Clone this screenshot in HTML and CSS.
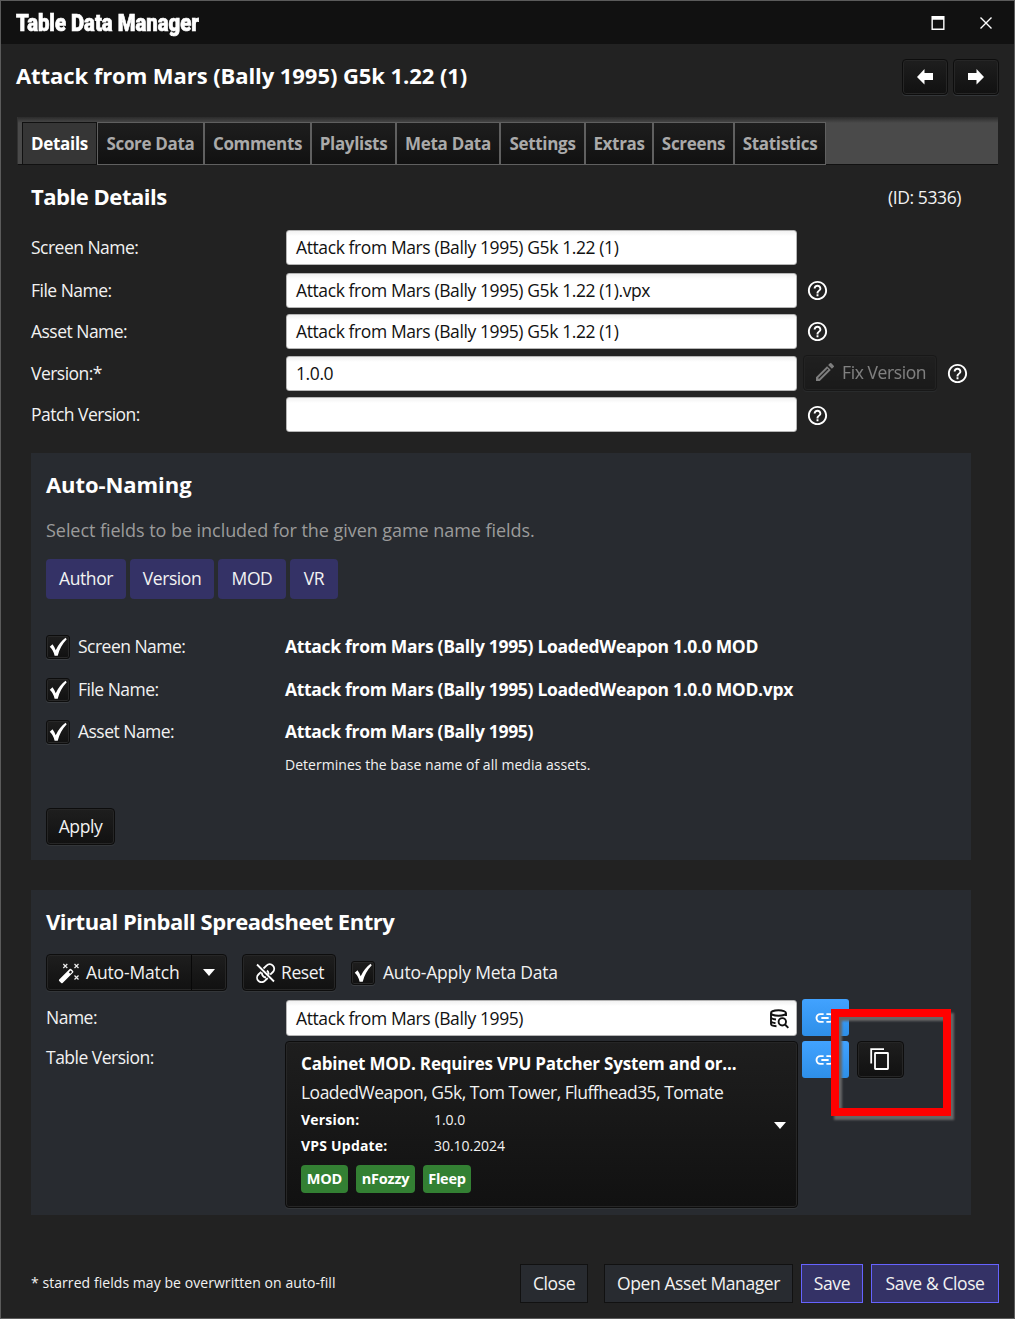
FILE: index.html
```html
<!DOCTYPE html>
<html lang="en">
<head>
<meta charset="utf-8">
<title>Table Data Manager</title>
<link rel="stylesheet" href="styles.css">
</head>
<body>
<svg class="defs" aria-hidden="true">
  <symbol id="help" viewBox="0 0 24 24"><path d="M11 18h2v-2h-2v2zm1-16C6.480 2 2 6.480 2 12s4.480 10 10 10 10-4.480 10-10S17.520 2 12 2zm0 18c-4.410 0-8-3.590-8-8s3.590-8 8-8 8 3.590 8 8-3.590 8-8 8zm0-14c-2.210 0-4 1.790-4 4h2c0-1.100.9-2 2-2s2 .9 2 2c0 2-3 1.750-3 5h2c0-2.250 3-2.500 3-5 0-2.210-1.790-4-4-4z"/></symbol>
  <symbol id="check" viewBox="0 0 24 24"><path d="M3 11.800 6 9Q8.200 11.800 9.500 15.500 13.500 7 20.200 2L21.500 3.500Q14 11.500 11.700 21.500H8.300Q6.800 15 3 11.800Z"/></symbol>
  <symbol id="link" viewBox="0 0 24 24"><path d="M10.500 6.700H7a5.300 5.300 0 0 0 0 10.600h3.500v-2.100H7a3.200 3.200 0 0 1 0-6.400h3.500zM8 11h8v2H8zM13.500 6.700H17a5.300 5.300 0 0 1 0 10.600h-3.500v-2.100H17a3.200 3.200 0 0 0 0-6.400h-3.500z"/></symbol>
</svg>
<div class="window">
  <header class="titlebar">
    <span class="app-name">Table Data Manager</span>
    <svg class="win-max" viewBox="0 0 14 15"><path d="M0 0h14v15H0zM1.500 4v9.500h11V4z" fill-rule="evenodd"/></svg>
    <svg class="win-close" viewBox="0 0 12 12"><path d="M.5.5l11 11M11.500.5l-11 11"/></svg>
  </header>
  <div class="heading">
    <h1>Attack from Mars (Bally 1995) G5k 1.22 (1)</h1>
    <button class="btn nav"><svg width="16" height="16" viewBox="0 0 16 16"><path d="M0 8 7.500 0v4H16v7H7.500v4.500z"/></svg></button>
    <button class="btn nav"><svg width="16" height="16" viewBox="0 0 16 16"><path d="M16 8 8.500 0v4H0v7h8.500v4.500z"/></svg></button>
  </div>
  <nav class="tabs">
    <span class="tab active t1">Details</span><span class="tab t2">Score Data</span><span class="tab t3">Comments</span><span class="tab t4">Playlists</span><span class="tab t5">Meta Data</span><span class="tab t6">Settings</span><span class="tab t7">Extras</span><span class="tab t8">Screens</span><span class="tab t9">Statistics</span>
  </nav>
  <main>
    <div class="section-head"><h2 class="tight">Table Details</h2><span class="record-id">(ID: 5336)</span></div>
    <div class="form">
      <div class="row"><label>Screen Name:</label><div class="field">Attack from Mars (Bally 1995) G5k 1.22 (1)</div></div>
      <div class="row"><label>File Name:</label><div class="field">Attack from Mars (Bally 1995) G5k 1.22 (1).vpx</div><svg class="help"><use href="#help"/></svg></div>
      <div class="row"><label>Asset Name:</label><div class="field">Attack from Mars (Bally 1995) G5k 1.22 (1)</div><svg class="help"><use href="#help"/></svg></div>
      <div class="row"><label>Version:*</label><div class="field">1.0.0</div><button class="btn fix" disabled><svg width="24" height="24" viewBox="0 0 24 24"><path d="M3 17.250V21h3.750L17.810 9.940l-3.750-3.750L3 17.250zM20.710 7.040a1 1 0 0 0 0-1.410l-2.340-2.340a1 1 0 0 0-1.410 0l-1.830 1.830 3.750 3.750 1.830-1.830z"/><path class="groove" d="M5.500 18.500 15 9"/></svg><span>Fix Version</span></button><svg class="help"><use href="#help"/></svg></div>
      <div class="row"><label>Patch Version:</label><div class="field"></div><svg class="help low"><use href="#help"/></svg></div>
    </div>
    <section class="panel naming">
      <h2>Auto-Naming</h2>
      <p class="hint">Select fields to be included for the given game name fields.</p>
      <div class="tokens"><button class="k1">Author</button><button class="k2">Version</button><button class="k3">MOD</button><button class="k4">VR</button></div>
      <div class="previews">
        <div class="preview"><span class="check"><svg><use href="#check"/></svg></span><label>Screen Name:</label><b>Attack from Mars (Bally 1995) LoadedWeapon 1.0.0 MOD</b></div>
        <div class="preview"><span class="check"><svg><use href="#check"/></svg></span><label>File Name:</label><b>Attack from Mars (Bally 1995) LoadedWeapon 1.0.0 MOD.vpx</b></div>
        <div class="preview"><span class="check"><svg><use href="#check"/></svg></span><label>Asset Name:</label><b>Attack from Mars (Bally 1995)</b></div>
      </div>
      <p class="note">Determines the base name of all media assets.</p>
      <button class="btn apply">Apply</button>
    </section>
    <section class="panel vps">
      <h2 class="tight">Virtual Pinball Spreadsheet Entry</h2>
      <div class="tools">
        <div class="btn split"><svg width="24" height="24" viewBox="0 0 24 24"><path d="M2.200 18.600 12.700 8.100a1 1 0 0 1 1.400 0l2 2a1 1 0 0 1 0 1.400L5.600 22a1 1 0 0 1-1.400 0l-2-2a1 1 0 0 1 0-1.400z"/><path class="tip" d="M11.800 11.200l1.800-1.800 1.500 1.500-1.800 1.800z"/><path class="spark" d="M6.300 3l4 4M10.300 3l-4 4M17.500 3l4 4M21.500 3l-4 4M17.500 14.500l4 4M21.500 14.500l-4 4"/></svg><span class="split-text">Auto-Match</span><span class="split-arrow"><i class="caret"></i></span></div>
        <button class="btn reset"><svg width="20" height="20" viewBox="0 0 20 20"><path d="M1 1.500 18 18.500M7.500 5.500 10.500 2.600a4.500 4.500 0 0 1 6.400 6.400l-2.700 2.700M11 7.500a4.300 4.300 0 0 1 1.500 4M5.200 8.800l-2.800 2.700a4.500 4.500 0 0 0 6.400 6.400l2.900-2.900M6 9.500a4.300 4.300 0 0 0 4 5"/></svg><span>Reset</span></button>
        <span class="check"><svg><use href="#check"/></svg></span><label>Auto-Apply Meta Data</label>
      </div>
      <div class="entry name-entry"><label>Name:</label><div class="field">Attack from Mars (Bally 1995)<svg class="db" viewBox="0 0 20 20"><path d="M17 7V4c0-1.500-3.200-2.700-7.500-2.700S2 2.500 2 4v11c0 1.200 2.500 2 5.500 2.200M2 4c0 1.500 3.200 2.800 7.500 2.800S17 5.500 17 4M2 8c0 1.200 2 2.100 5 2.500M2 12c0 1 2 1.800 4.500 2.200"/><circle cx="13.300" cy="12.800" r="3.700"/><path d="M16 15.500l3.300 3.300"/></svg></div><button class="link"><svg width="24" height="24"><use href="#link"/></svg></button></div>
      <div class="entry"><label>Table Version:</label>
        <div class="btn version">
          <strong>Cabinet MOD. Requires VPU Patcher System and or...</strong>
          <span class="authors">LoadedWeapon, G5k, Tom Tower, Fluffhead35, Tomate</span>
          <div class="meta"><b>Version:</b><span>1.0.0</span></div>
          <div class="meta"><b>VPS Update:</b><span>30.10.2024</span></div>
          <div class="tags"><span class="g1">MOD</span><span class="g2">nFozzy</span><span class="g3">Fleep</span></div>
          <i class="caret"></i>
        </div>
        <button class="link"><svg width="24" height="24"><use href="#link"/></svg></button>
        <button class="btn copy"><svg width="20" height="22" viewBox="0 0 20 22"><path d="M1.200 15.500V1.200H14"/><rect x="5" y="5" width="13" height="16" rx=".5"/></svg><span class="marker"></span></button>
      </div>
    </section>
  </main>
  <footer>
    <span class="footnote">* starred fields may be overwritten on auto-fill</span>
    <button class="close">Close</button><button class="assets">Open Asset Manager</button><button class="primary save">Save</button><button class="primary save-close">Save &amp; Close</button>
  </footer>
</div>
</body>
</html>
```
FILE: styles.css
```css
* { box-sizing: border-box; }
body { margin: 0; background: #222; color: #f2f2f2; font: 17.5px/24px "Open Sans", "Noto Sans", sans-serif; letter-spacing: -.4px; white-space: nowrap; }
h1, h2, p { margin: 0; }
h1, h2 { font-size: 22px; line-height: 28px; padding-bottom: 2px; font-weight: 700; color: #fff; letter-spacing: -.07px; }
h2.tight { letter-spacing: -.47px; }
button { font: inherit; color: inherit; letter-spacing: inherit; padding: 0 0 2px; border: 0; }
svg { display: block; flex: none; }
.defs { position: absolute; width: 0; height: 0; }
.window { width: 1015px; height: 1319px; border: 1px solid #5b5b5b; display: flex; flex-direction: column; overflow: hidden; }

.titlebar { height: 43px; background: #111; display: flex; align-items: center; padding: 0 22px 0 15px; flex: none; }
.app-name { font: 900 24px/30px Roboto, sans-serif; letter-spacing: 0; color: #fff; -webkit-text-stroke: .7px #fff; transform: scaleX(.845); transform-origin: left; margin-right: auto; }
.win-max { width: 14px; height: 14px; fill: #fff; margin-right: 35px; }
.win-close { width: 12px; height: 12px; stroke: #fff; stroke-width: 1.4; }

.heading { height: 73px; display: flex; align-items: center; gap: 5px; padding: 0 15px 8px 15px; flex: none; }
.heading h1 { margin: -2px auto 0 0; }
.btn { background: linear-gradient(#1e1e1e, #111); border: 1px solid #0d0d0d; border-radius: 4px; box-shadow: inset 0 0 0 1px #262626, 0 1px 0 #333639; display: flex; align-items: center; color: #f2f2f2; }
.nav { width: 46px; height: 36px; justify-content: center; padding: 0; }
.nav svg { fill: #fff; }

.tabs { height: 48px; margin: 0 16px; padding: 5px 0 0 4px; display: flex; flex: none; background: linear-gradient(#2b2b2b, #4a4a4a 6px); border-bottom: 1px solid #111; border-left: 1px solid #333; }
.tab { height: 43px; border: 1px solid #606060; background: linear-gradient(#1e1e1e, #111); font-size: 17px; font-weight: 700; letter-spacing: -.32px; color: #aaa; text-align: center; line-height: 41px; }
.tab.active { background: #363636; color: #fff; border-color: #111; }
.t1 { width: 75px; } .t2 { width: 107px; } .t3 { width: 107px; } .t4 { width: 85px; } .t5 { width: 104px; } .t6 { width: 85px; } .t7 { width: 68px; } .t8 { width: 81px; } .t9 { width: 92px; }

main { padding: 0 43px 0 30px; }
.section-head { display: flex; justify-content: space-between; align-items: center; height: 65px; padding-right: 10px; }
.section-head h2 { margin-top: -2px; }
.record-id { padding-bottom: 2px; }
.form { display: grid; grid-template-rows: 43px 41px 42px 41px 35px; }
.row { display: flex; height: 35px; align-items: center; }
.row label { width: 255px; letter-spacing: -.52px; padding-bottom: 2px; }
.field { width: 511px; height: 35px; border: 1px solid #b5b5b5; border-radius: 3px; background: linear-gradient(#f1f1f1, #fff 5px); color: #111; padding-left: 9px; display: flex; align-items: center; line-height: 33px; }
.help { width: 23px; height: 23px; fill: #fff; margin-left: 9px; }
.help.low { margin-top: 2px; }
.fix { width: 134px; height: 36px; margin: -2px 0 0 6px; padding: 0 0 1px 9px; gap: 5px; opacity: .45; }
.fix svg { fill: #eee; }
.groove { stroke: #222; stroke-width: 1.200; }

.panel { background: #282b30; padding: 0 15px; }
.naming { height: 407px; margin-top: 21px; padding-top: 17px; }
.hint { color: #9b9b9b; margin-top: 18px; font-size: 18px; letter-spacing: -.05px; }
.tokens { display: flex; gap: 4px; margin-top: 17px; }
.tokens button { height: 40px; background: #343266; border-radius: 4px; }
.k1 { width: 80px; } .k2 { width: 84px; } .k3 { width: 68px; } .k4 { width: 48px; }
.previews { display: grid; grid-template-rows: 43px 42px 24px; margin-top: 36px; }
.preview { display: flex; height: 24px; line-height: 22px; }
.preview label { width: 207px; margin-left: 8px; letter-spacing: -.52px; }
b, strong { color: #fff; }
.preview b { letter-spacing: -.31px; }
.check { width: 24px; height: 24px; border: 1px solid #0d0d0d; border-radius: 3px; background: linear-gradient(#1e1e1e, #111); box-shadow: inset 0 0 0 1px #282828, 0 1px 0 #3a3d41; flex: none; }
.check svg { width: 22px; height: 22px; fill: #fff; }
.note { font-size: 14px; letter-spacing: .03px; margin: 9px 0 0 239px; }
.apply { width: 69px; height: 37px; justify-content: center; margin-top: 31px; }

.vps { height: 325px; margin-top: 30px; padding-top: 17px; }
.tools { display: flex; align-items: center; margin-top: 17px; height: 37px; }
.split { width: 181px; height: 37px; padding-left: 10px; letter-spacing: -.15px; }
.split svg { fill: #fff; margin-right: 5px; }
.tip { fill: #181818; }
.spark { stroke: #eee; stroke-width: 1.2; }
.split-text { width: 105px; padding-bottom: 2px; }
.split-arrow { width: 35px; height: 35px; border-left: 1px solid #080808; display: flex; align-items: center; justify-content: center; }
.caret { width: 0; height: 0; border: 6px solid transparent; border-top: 7px solid #fff; border-bottom: 0; }
.reset { width: 94px; height: 37px; margin: 0 15px; padding: 0 0 0 13px; gap: 5px; }
.reset span { padding-bottom: 2px; }
.reset svg { fill: none; stroke: #fff; stroke-width: 1.800; }
.tools label { margin-left: 8px; letter-spacing: -.2px; padding-bottom: 2px; }
.entry { display: flex; }
.entry label { width: 240px; margin-top: 4px; letter-spacing: -.5px; }
.name-entry { margin-top: 8px; height: 42px; }
.name-entry label { margin-top: 6px; }
.name-entry .field { height: 36px; margin-top: 1px; justify-content: space-between; padding-right: 7px; }
.db { width: 20px; height: 20px; fill: none; stroke: #111; stroke-width: 1.900; margin-top: 1px; }
.link { width: 47px; height: 37px; padding: 0; border-radius: 3px; background: linear-gradient(#41a2ff, #2e8fe8); margin-left: 5px; display: flex; align-items: center; justify-content: center; flex: none; }
.link svg { fill: #fff; width: 22px; height: 22px; margin-right: 2px; }
.version { width: 513px; height: 167px; margin-left: -1px; position: relative; display: block; padding: 10px 15px; flex: none; }
.version + .link { margin-left: 4px; }
.version strong, .authors { display: block; }
.version strong { font-size: 17px; letter-spacing: -.2px; }
.authors { margin-top: 4px; letter-spacing: -.51px; }
.meta { display: flex; font-size: 14px; letter-spacing: 0; height: 26px; margin-top: 4px; }
.meta + .meta { margin-top: 0; }
.meta span { letter-spacing: -.04px; }
.meta b { width: 133px; letter-spacing: .2px; }
.tags { display: flex; gap: 8px; margin-top: 5px; }
.tags span { height: 28px; line-height: 27px; border-radius: 4px; background: #338033; color: #fff; font-weight: 700; font-size: 14.500px; letter-spacing: -.2px; text-align: center; }
.g1 { width: 47px; } .g2 { width: 59px; } .g3 { width: 48px; }
.version .caret { position: absolute; right: 11px; top: 80px; }
.copy { width: 47px; height: 37px; margin-left: 8px; padding: 0 2px 1px 0; justify-content: center; position: relative; }
.copy svg { fill: none; stroke: #fff; stroke-width: 1.800; }
.marker { position: absolute; left: -27px; top: -33px; width: 120px; height: 107px; border: 8px solid #f00; filter: drop-shadow(3px 4px 1px #666); }

footer { display: flex; margin: 49px 15px 0 30px; height: 39px; align-items: center; }
.footnote { font-size: 14px; letter-spacing: .06px; margin: -2px auto 0 0; }
footer button { height: 39px; background: #282b30; border: 1px solid #111; }
.close { width: 68px; margin-right: 16px; } .assets { width: 189px; margin-right: 8px; } .save { width: 62px; margin-right: 8px; } .save-close { width: 128px; }
footer .primary { background: #343266; border-color: #6663ff; }
```
